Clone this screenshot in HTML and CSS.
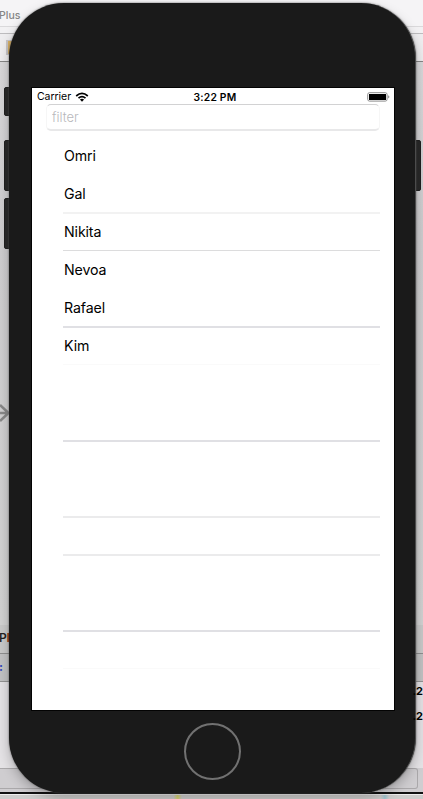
FILE: index.html
```html
<!DOCTYPE html>
<html lang="en">
<head>
<meta charset="utf-8">
<title>Simulator</title>
<link rel="stylesheet" href="styles.css">
</head>
<body>
<div class="desktop">
  <div class="titlebar"><span>Plus</span></div>
  <div class="gap"></div>
  <div class="toolbar"><i class="swatch"></i></div>
  <div class="canvas">
    <svg class="arrow" width="10" height="22" viewBox="0 0 10 22"><path d="M0 11H9M0 3L8.5 11L0 19" fill="none" stroke="#888" stroke-width="2.6"/></svg>
  </div>
  <div class="panel-head">P<b>l</b></div>
  <div class="panel-bar">:</div>
  <div class="console"><span>.2</span><span>.2</span></div>
  <div class="search-row"><div class="search"></div></div>
  <div class="edge"></div>
  <div class="dock"></div>
</div>
<div class="device">
  <i class="button mute"></i><i class="button vol-up"></i><i class="button vol-down"></i><i class="button power"></i>
  <div class="body">
    <div class="screen">
      <header class="status">
        <div class="carrier">Carrier
          <svg width="14" height="10" viewBox="0 0 14 10"><g fill="none" stroke="#000" stroke-width="1.7"><path d="M1.2 4Q7 -1.3 12.8 4"/><path d="M3.5 6.2Q7 3 10.5 6.2"/></g><path d="M4.9 7.6Q7 5.9 9.1 7.6L7 9.8Z"/></svg>
        </div>
        <div class="time">3:22 PM</div>
        <div class="power-state">
          <svg width="23" height="10" viewBox="0 0 23 10"><rect x=".7" y=".7" width="19.4" height="8.4" rx="1.8" fill="#fff" stroke="#8b8b8b"/><rect x="2" y="2" width="17" height="6" fill="#000"/><path d="M21.2 3.2Q23.6 4.9 21.2 6.6Z" fill="#8b8b8b"/></svg>
        </div>
      </header>
      <input class="filter" placeholder="filter" aria-label="filter">
      <ul class="list">
        <li>Omri</li>
        <li class="pale">Gal</li>
        <li class="thin">Nikita</li>
        <li>Nevoa</li>
        <li class="strong">Rafael</li>
        <li class="faint">Kim</li>
        <li></li>
        <li class="strong"></li>
        <li></li>
        <li class="mid"></li>
        <li class="mid"></li>
        <li></li>
        <li class="strong"></li>
        <li class="faint"></li>
      </ul>
    </div>
    <div class="home"></div>
  </div>
</div>
</body>
</html>
```
FILE: styles.css
```css
* { box-sizing: border-box; }
body { margin: 0; width: 423px; height: 799px; overflow: hidden; position: relative; background: #ccc; font-family: Inter, "Liberation Sans", sans-serif; }
.desktop { display: flex; flex-direction: column; height: 799px; }
.titlebar { height: 27px; background: #f5f4f6; border-bottom: 1px solid #dad9db; color: #858585; font-size: 10.5px; font-weight: 500; line-height: 32px; overflow: hidden; }
.titlebar span { margin-left: -1px; }
.gap { height: 7px; background: #f2f1f3; border-bottom: 1px solid #bdbcbe; }
.toolbar { height: 28px; background: #eeedef; border-bottom: 1px solid #858585; padding: 6px 0 0 6px; }
.swatch { display: block; width: 10px; height: 15px; background: #d8b064; border: 1px solid #c7c5c8; border-left-width: 2px; }
.canvas { height: 563px; background: linear-gradient(#d9d8da, #cecdcf 30%, #d2d2d2); padding-top: 340px; }
.arrow { display: block; }
.panel-head { height: 29px; background: #c9c9c9; border-bottom: 1px solid #8f8f8f; font-size: 12px; font-weight: 600; line-height: 25px; color: #222; text-indent: -1px; }
.panel-head b { color: #9a3518; }
.panel-bar { height: 28px; background: #c2c2c3; border-bottom: 1px solid #929292; color: #3347bc; font-size: 12px; font-weight: 700; line-height: 25px; text-indent: -1px; }
.console { height: 86px; background: #e4e2e5; display: flex; flex-direction: column; align-items: flex-end; font-size: 11px; font-weight: 700; line-height: 25px; }
.console span { position: relative; top: -3px; z-index: 1; }
.search-row { height: 24px; background: #cfcdd0; padding-right: 5px; }
.search { height: 21px; border: 1px solid #aaa8aa; border-left: 0; border-radius: 0 3px 3px 0; }
.edge { height: 3px; background: #111; border-bottom: 1px solid #eee; }
.dock { flex: 1; background: linear-gradient(90deg, #cecdcc 41%, #d9d46f 42%, #cecdcc 43%, #cecdcc 90%, #9fc4cf 91%, #cecdcc 92%); }
.device { position: absolute; left: 9px; top: 3px; width: 407px; height: 790px; }
.body { position: relative; width: 407px; height: 790px; border-radius: 55px; background: #1a1a1a; box-shadow: 0 0 2px #555, 0 5px 12px rgba(0,0,0,.25); padding: 85px 22px 0 23px; border-right: 1px solid #4c4c4c; }
.button { position: absolute; background: #292929; border: 1px solid #202020; border-radius: 2px; }
.mute, .vol-up, .vol-down { left: -5px; width: 9px; }
.mute { top: 84px; height: 29px; }
.vol-up { top: 137px; height: 51px; }
.vol-down { top: 195px; height: 51px; }
.power { right: -5px; top: 137px; width: 9px; height: 51px; }
.screen { width: 362px; height: 622px; background: #fff; outline: 1px solid #030303; }
.status { height: 16px; display: grid; grid-template-columns: 1fr auto 1fr; padding: 0 4px 0 5px; align-items: center; font-size: 10.5px; line-height: 16px; }
.carrier { display: flex; align-items: center; gap: 4px; padding-top: 1px; letter-spacing: -.05px; }
.time { font-weight: 600; font-size: 10.3px; letter-spacing: .2px; padding: 0 0 0 3px; }
.power-state { display: flex; justify-content: flex-end; padding-top: 0; }
.filter { display: block; width: 334px; height: 27px; margin: 0 0 7px 14px; padding: 0 5px; border: 1px solid #f6f6f6; border-top-color: #d2d2d3; border-bottom: 2px solid #e8e8e9; border-radius: 5px; font: 300 13px Inter, sans-serif; outline: 0; background: #fff; }
.filter::placeholder { color: #b8b8bc; opacity: 1; }
.list { list-style: none; margin: 0; padding: 0 14px 0 31px; }
.list li { height: 38px; padding-left: 1px; line-height: 36px; font-size: 14.2px; letter-spacing: -.12px; border-bottom: 0 solid #ddd; }
.list .pale { border-bottom: 2px solid #f2f2f2; }
.list .thin { height: 37px; margin-bottom: 1px; border-bottom: 1px solid #dcdcdd; }
.list .strong { border-bottom: 2px solid #e0e0e4; }
.list .mid { border-bottom: 2px solid #ebebec; }
.list .faint { height: 37px; margin-bottom: 1px; border-bottom: 1px solid #fafafa; }
.home { width: 57px; height: 57px; border: 2.5px solid #717171; border-radius: 50%; margin: 13px 0 0 152px; }
```
